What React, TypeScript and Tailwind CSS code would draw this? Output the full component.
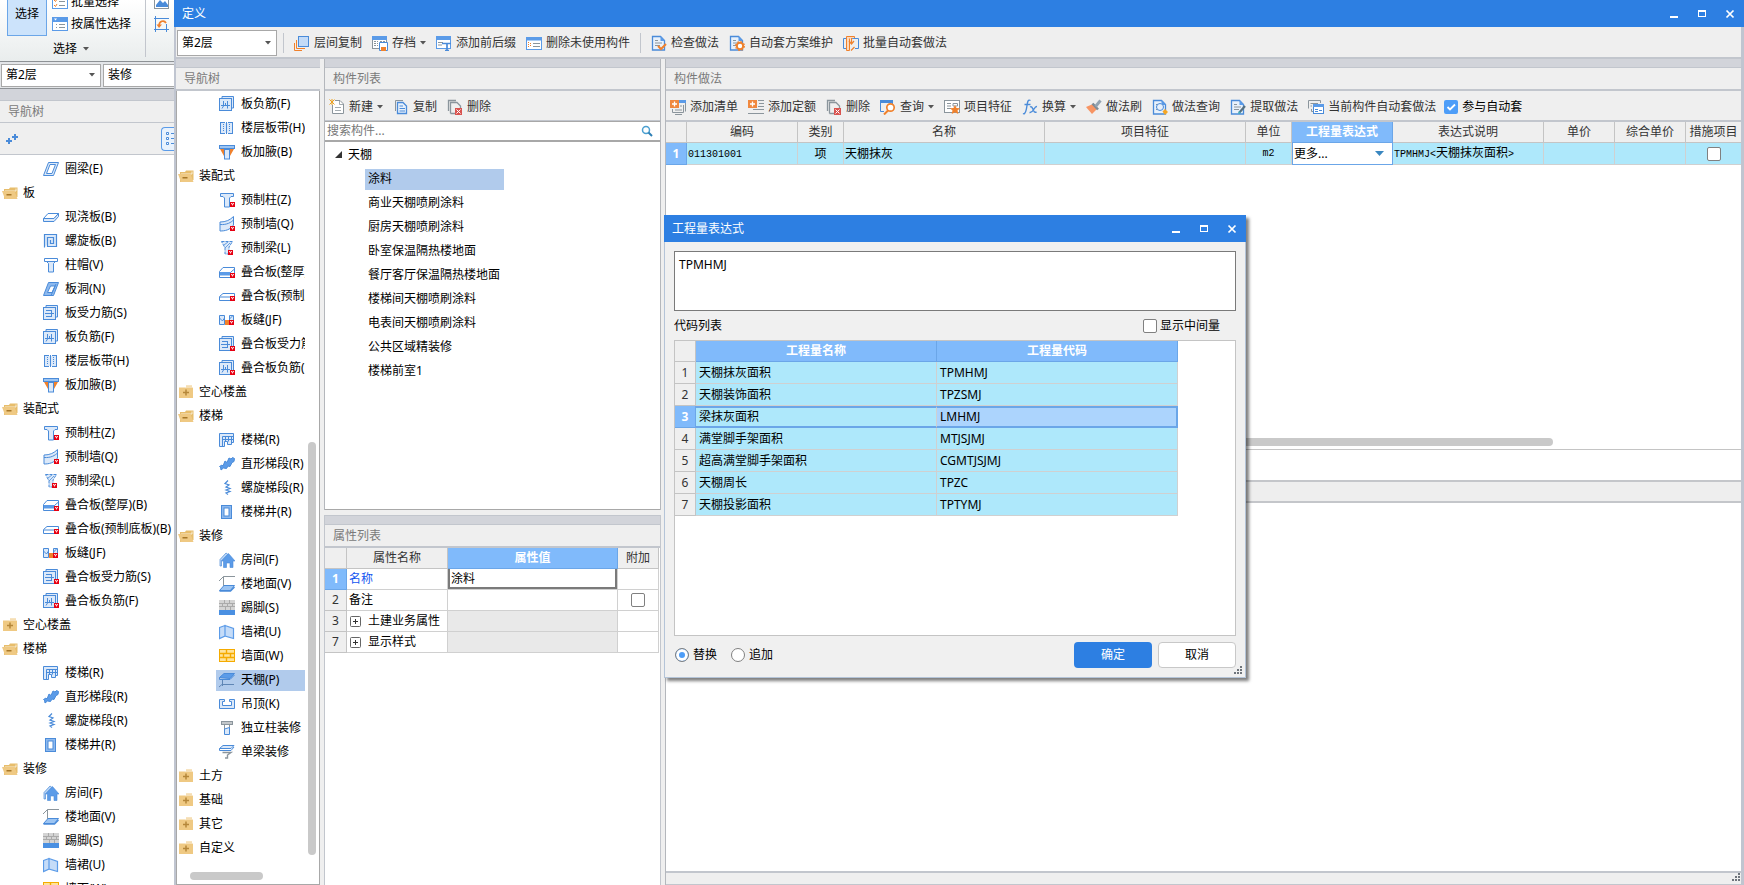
import React from 'react';

const B = '#4a8bd9';
const L = '#dce9f9';
const M = '#5b9be8';
const G = '#8b959c';
const O = '#f0812c';

const badge = (
  <g>
    <rect x="11" y="10" width="5" height="5" fill="#e60012" />
    <path d="M12.5 11v1h1v1.5M14.5 11v1h-1" stroke="#fff" strokeWidth="0.8" fill="none" />
  </g>
);

const rebarFrame = (
  <>
    <path d="M3 2.5V0.5H14.5V12H12.5" fill={L} stroke={B} />
    <rect x="0.5" y="2.5" width="12" height="12" fill={L} stroke={B} />
  </>
);
const rebarS = (
  <>
    {rebarFrame}
    <path d="M3 5.5H9M2 8.5H11M3 11.5H9M8.5 5.5V11.5" fill="none" stroke={B} />
  </>
);
const rebarF = (
  <>
    {rebarFrame}
    <path d="M2 9.5H11M4.5 5V10L3 12.500M8.5 5V12.500M6.5 7V9.500" fill="none" stroke={B} />
  </>
);
const removePages = (
  <>
    <path d="M1.5 12V1.5H9M3.5 14.5V3.5H10L13.5 7V9M3.5 14.5H8" fill="none" stroke={G} strokeWidth="1.3" />
    <rect x="8" y="9" width="7" height="7" fill="#d9534f" />
    <path d="M9.5 10.5l4 4M13.5 10.5l-4 4" stroke="#fff" />
  </>
);
const doc = (
  <>
    <path d="M1.5 15V1.5H9.5L13.5 5.5V15z" fill="#e8f1fb" stroke={B} strokeWidth="1.3" />
    <path d="M9.5 1v5H14" fill={M} />
    <path d="M4 5.5h3M4 8h7M4 10.5h5" stroke={G} />
  </>
);

const shapes: Record<string, React.ReactNode> = {
  folderOpen: (
    <>
      <path d="M2 14V4h5l1-1.5h7.5V12z" fill="#e7bd6b" />
      <path d="M3 6h11v-2.5" stroke="#fff" fill="none" strokeWidth="0.7" />
      <path d="M0 6H12.5L15.5 14H3z" fill="#efc983" />
      <rect x="4.5" y="9" width="5" height="1.5" fill="#a87828" />
    </>
  ),
  folderClosed: (
    <>
      <path d="M8 1.5h6V4H8z" fill="#efc983" />
      <rect x="1" y="3.5" width="14" height="10.5" fill="#efc983" />
      <path d="M7.5 3H14.5" stroke="#fff" strokeWidth="0.8" />
      <path d="M5 8.5h6M8 5.5v6" stroke="#b5873a" strokeWidth="1.5" />
    </>
  ),
  ringBeam: (
    <>
      <path d="M5.5 1.5H15.5L10.5 14.5H0.5z" fill={L} stroke={B} />
      <path d="M7 3.5H12.5L9 12.5H3.5z" fill="#fff" stroke={B} />
    </>
  ),
  hole: (
    <>
      <path d="M5.5 1.5H15.5L10.5 14.5H0.5z" fill="#8db9ee" stroke={B} />
      <path d="M7.5 5H12L9 11.5H4.5z" fill="#fff" stroke={B} />
      <path d="M8 14.5L13 3" stroke={B} />
    </>
  ),
  slab: (
    <>
      <path d="M0.5 9.5L5 4.5H15.5L11 9.5z" fill="#fff" stroke={B} />
      <path d="M0.5 9.5V12.5H11L15.5 7.5V4.5L11 9.5z" fill={L} stroke={B} />
    </>
  ),
  spiralSlab: (
    <path d="M1.5 14.5V1.5H13.5V13.5H4.5V4.5H10.5V10.5H7.5V7" fill={L} stroke={B} strokeWidth="1.2" />
  ),
  cap: (
    <>
      <path d="M1.5 1.5H14.5V4.5H1.5z" fill="#fff" stroke={B} />
      <path d="M3.5 4.5L5.5 6.5V15H10.5V6.5L12.5 4.5z" fill={L} stroke={B} />
    </>
  ),
  rebarS,
  rebarF,
  strip: (
    <>
      <rect x="1" y="3" width="13" height="10" fill={L} />
      <path d="M1 2.5H6M9 2.5H14M1 13.5H6M9 13.5H14M1.5 2V14M7.5 2V14M13.5 2V14" stroke={B} />
      <path d="M4.5 4V12M10.5 4V12" stroke={B} strokeDasharray="1 1" />
    </>
  ),
  haunch: (
    <>
      <path d="M1 5H5V12zM15 5H11V12z" fill={O} />
      <rect x="0.5" y="1.5" width="15" height="3" fill="#9cc4f2" stroke={B} />
      <rect x="5.5" y="5.5" width="5" height="9.500" fill={L} stroke={B} />
    </>
  ),
  preCol: (
    <>
      <path d="M1.5 1.5H14.5V4.5H12L10.5 6V15H5.5V6L4 4.5H1.5z" fill={L} stroke={B} />
      {badge}
    </>
  ),
  preWall: (
    <>
      <path d="M1 6C7 6 11 4 14.5 0.5V9C11 14 6 15 1 15z" fill={L} stroke={B} />
      <path d="M1 8.5C8 9 12 6.5 15 3.5" fill="none" stroke={B} />
      {badge}
    </>
  ),
  preBeam: (
    <>
      <path d="M2.5 1.5H13.5L10 7V14H6V8z" fill={L} stroke={B} strokeDasharray="3 1" />
      <path d="M5 5L9 2M6 8l5-5" stroke={B} strokeWidth="0.8" />
      <g transform="translate(-2,0)">{badge}</g>
    </>
  ),
  compWhole: (
    <>
      <path d="M0.5 7.5L4 3.5H15.5V10L12 13.5H0.5z" fill="#fff" stroke={B} />
      <rect x="1" y="8" width="11" height="3.5" fill={M} />
      <path d="M12 8l3.5-3" stroke={B} />
      <g transform="translate(0,-1)">{badge}</g>
    </>
  ),
  compBase: (
    <>
      <path d="M0.5 8.5L4 5.5H15.5V10L12 12.5H0.5z" fill="#fff" stroke={B} />
      <path d="M1 9H12" stroke={B} />
      <g transform="translate(0,-2)">{badge}</g>
    </>
  ),
  seam: (
    <>
      <path d="M0.5 3.5H5.5V12.5H0.5zM10.5 3.5H14.5V12.5H10.5z" fill={L} stroke={B} />
      <path d="M0.5 6l3 3 2-3M10.5 7l3-3" stroke={B} fill="none" />
      <rect x="6" y="8" width="5" height="5" fill={O} />
      <g transform="translate(-1,-2)">{badge}</g>
    </>
  ),
  compS: (
    <>
      {rebarS}
      {badge}
    </>
  ),
  compF: (
    <>
      {rebarF}
      {badge}
    </>
  ),
  stair: (
    <>
      <path d="M0.5 1.5H14.5V10.5H12.5V12.5H8.5V9.5H5.5V14.5H0.5z" fill={L} stroke={B} />
      <path d="M3.5 4.5H14M3.5 4.5V14M6.5 4.5V9M9.5 4.5V9.5M12.5 4.5V12M3 7.5H14" fill="none" stroke={B} />
    </>
  ),
  straight: (
    <path d="M0.5 10.5L3 9l1 1 2-5 2 1.5 2-4.5 2 1 1.5-1.5 2 1-.5 3-2 1-2 4-2-.5-1.5 2.5-3-.5L2 14l-.5-3z" fill={M} stroke={B} />
  ),
  spiralStair: (
    <path d="M9 0.5L6 3.5l4 1.5-3 2 4 1.5-4 1.5 4 1.5-4 1.5 2 1.5" fill="none" stroke={B} strokeWidth="1.2" />
  ),
  well: (
    <>
      <rect x="2.5" y="1.5" width="10" height="13" fill="#8db9ee" stroke={B} />
      <rect x="5" y="4" width="5" height="8" fill="#fff" stroke={B} />
    </>
  ),
  room: (
    <>
      <path d="M1 7.5L7 1l2 1.5L2.5 9V14H1z" fill="#b9d5f6" stroke={B} strokeWidth="0.7" />
      <path d="M9.5 1.5L2.5 9H4.5V15.5H7.5V11H11V15.5H14V9H16z" fill={M} stroke={B} strokeWidth="0.6" />
    </>
  ),
  floor: (
    <>
      <path d="M0 5L4.5 0.5H16M4.5 0.5V10" fill="none" stroke={G} />
      <path d="M0.5 14.5L5 9.5H15.5L11.5 14.5z" fill="#9cc4f2" stroke={B} />
      <path d="M0.5 15H11.5L15.5 11" fill="none" stroke={B} strokeWidth="1.5" />
    </>
  ),
  skirting: (
    <>
      <rect x="0" y="0" width="16" height="10" fill="#d4d4d4" />
      <path d="M0 3.5H16M0 6.5H16M5.5 0V3.5M10.5 0V3.5M3.5 3.5V7M8.5 3.5V7M13.5 3.5V7M6.5 7V10M11.5 7V10" stroke="#aaa" />
      <rect x="0" y="10" width="16" height="5" fill="#4a90e2" />
    </>
  ),
  wainscot: (
    <path d="M0.5 3.5L6 1.5V12L0.5 14.5zM6 1.5L14.5 4.5V14.5L6 12z" fill="#c5dcf8" stroke={M} strokeWidth="1.2" />
  ),
  wallFace: (
    <>
      <rect x="0.5" y="1.5" width="15" height="12" fill="#ffe39a" stroke="#f5ab00" />
      <path d="M0 5.5H16M0 9.5H16M7.5 1V5M4.5 6V9M11.5 6V9M7.5 10V14" stroke="#f5ab00" strokeWidth="1.4" />
    </>
  ),
  ceiling: (
    <>
      <path d="M0.5 5.5L5 1.5H15.5L11 6.5z" fill={M} stroke={B} />
      <path d="M0.5 5.5V7.5H11L15.5 3" fill="none" stroke={B} />
      <path d="M3.5 8V14M3.5 12.5H15M3.5 12L0 15" stroke="#5f86b5" fill="none" />
    </>
  ),
  suspended: (
    <path d="M0.5 3.5H5.5V5.5H3.5V9.5H12.5V5.5H10.5V3.5H15.5V12.5H0.5z" fill={L} stroke={B} />
  ),
  colDecor: (
    <>
      <rect x="2.5" y="1.5" width="11" height="3" fill="#c3c7ca" stroke={G} />
      <path d="M5.5 4.5V9M10.5 4.5V8" stroke={G} />
      <path d="M5.5 9L10.5 7.5V14.5H5.5z" fill={L} stroke={B} />
    </>
  ),
  beamDecor: (
    <>
      <path d="M0.5 4.5L4 1.5H15L12 4.5z" fill={L} stroke={B} />
      <path d="M0.5 4.5V6.5H12L15 3" fill="none" stroke={B} />
      <path d="M3.5 8.5H12L8.5 11v3H6" fill="none" stroke={G} strokeWidth="1.4" />
    </>
  ),
  layerCopy: (
    <>
      <path d="M2.5 5V13.5H11M0.5 8V15.5H8" fill="none" stroke={O} />
      <rect x="4.5" y="1.5" width="10" height="10" fill="#c3dbf8" stroke={B} />
    </>
  ),
  archive: (
    <>
      <rect x="0.5" y="1.5" width="14" height="12" fill="#fff" stroke={G} />
      <rect x="0" y="1" width="15" height="4" fill={M} />
      <path d="M2 6.5H6M2 8.5H6M2 10.5H6M8 6.5H13" stroke={G} strokeDasharray="2 1" />
      <path d="M7.5 7.5H15.5V15.5H7.5z" fill="#fff" stroke={B} />
      <rect x="9" y="12" width="5" height="4" fill={O} />
    </>
  ),
  prefix: (
    <>
      <rect x="0.5" y="1.5" width="14" height="12" fill="#fff" stroke={M} />
      <rect x="0" y="1" width="15" height="4" fill={M} />
      <path d="M2 7.5H7M2 10H6" stroke={G} />
      <path d="M6 8.5H15M11 8V15.5M9 15.5H13" stroke={B} strokeWidth="1.7" />
    </>
  ),
  listPanel: (
    <>
      <rect x="0.5" y="2.5" width="15" height="12" fill="#fff" stroke={M} />
      <rect x="0" y="2" width="16" height="3.5" fill={M} />
      <path d="M2 7.5h1M4 8.5h1M2 9.5h1M4 10.5h1M2 11.5h1" stroke={O} />
      <path d="M7 8.5H14M7 11.5H14" stroke={G} />
    </>
  ),
  check: (
    <>
      {doc}
      <path d="M7 11l3 3 5-5" fill="none" stroke={O} strokeWidth="2" />
    </>
  ),
  gear: (
    <>
      {doc}
      <circle cx="11" cy="11" r="3.200" fill="#fff" stroke={O} strokeWidth="2" />
      <circle cx="11" cy="11" r="4.600" fill="none" stroke={O} strokeDasharray="1.8 1.8" />
    </>
  ),
  batch: (
    <>
      <path d="M3 3.5H0.500V13.5H3M8 3.5H15.5V13.5H12" fill="none" stroke={B} />
      <path d="M11.5 3V1.5H3.5V15.5H6.5V3.500" fill="#fbd9bd" stroke={O} />
      <path d="M8 15.5L11.5 12M8.5 3V8.5M6 6l2.5 3L11 6" fill="none" stroke={O} strokeWidth="1.2" />
    </>
  ),
  newDoc: (
    <>
      <path d="M3.5 6V14.5H14.5V5L11 1.5H6" fill="#fff" stroke={G} />
      <path d="M10.5 2V5.5H14.5M6 8.5H12M6 11.5H12" fill="none" stroke={G} strokeWidth="0.8" />
      <path d="M0.5 0.5l5 5M5.5 0.5l-5 5M3 0V6" stroke="#eda11f" />
    </>
  ),
  copy: (
    <>
      <path d="M2.5 12V1.5H10" fill="none" stroke={G} />
      <path d="M4.5 3.5H10L13.5 7V14.5H4.5z" fill="#e8f1fb" stroke={B} strokeWidth="1.3" />
      <path d="M6.5 7H10M6.5 9.5H12M6.5 12H12" stroke={B} />
    </>
  ),
  removePages,
  addList: (
    <>
      <path d="M9 1.5H15.5V12.5" fill="none" stroke={G} />
      <rect x="9" y="1" width="7" height="3" fill={M} />
      <path d="M2.5 10V13.5H13.5V6M5 15.5H12M10 7H12M5 11H12" fill="none" stroke={G} />
      <rect x="0" y="1" width="9" height="8" fill="#f0883e" />
      <path d="M4.5 2.5V7.5M2 5H7" stroke="#fff" strokeWidth="1.3" />
    </>
  ),
  addQuota: (
    <>
      <path d="M10 1.5H16M11 4.5H16M10 7.5H16M5 10.5H16M0 14.5H16" stroke={G} />
      <rect x="0" y="1" width="9" height="8" fill="#f0883e" />
      <path d="M4.5 2.5V7.5M2 5H7" stroke="#fff" strokeWidth="1.3" />
    </>
  ),
  query: (
    <>
      <path d="M0.5 4V12.5H4M12.5 2V5" fill="none" stroke={B} />
      <rect x="0" y="1" width="13" height="3" fill={B} />
      <circle cx="10.5" cy="8.5" r="3.700" fill="#fff" stroke={O} strokeWidth="1.7" />
      <path d="M8 11.5L4 15.5" stroke={O} strokeWidth="2" />
    </>
  ),
  feature: (
    <>
      <rect x="0.5" y="1.5" width="15" height="12" fill="#fff" stroke={G} />
      <path d="M3 4.5H7M3 7H7M3 9.5H7M9 4.5H13.5V7H9z" fill="none" stroke={G} />
      <path d="M11 6l1.5 3 3.5.3-2.5 2.3.8 3.4-3.3-1.800L7.700 15l.8-3.400L6 9.300 9.500 9z" fill={O} />
    </>
  ),
  fx: (
    <path d="M8.500 1.500C6 0 5.500 3 5 6.500S3.500 16 1 14.500M2.500 5.500H8.500M8 8C11.500 6 10.500 15 14.500 13M15 7.500C12 7 11.500 14.500 7.500 13.500" fill="none" stroke={B} strokeWidth="1.4" />
  ),
  brush: (
    <>
      <path d="M0 8L7 5l4 5-5 5z" fill="#f79564" />
      <path d="M6.5 4.5L12 10.5" stroke="#7d8a94" strokeWidth="2.5" />
      <path d="M9.5 7.5L14.5 1.5" stroke="#93a3b1" strokeWidth="3" />
    </>
  ),
  docQuery: (
    <>
      {doc}
      <circle cx="8" cy="8" r="3.500" fill="#e8f1fb" stroke={B} />
      <path d="M10.5 12.5l2.500-2.500 3 3-3 3z" fill="#f5a623" />
    </>
  ),
  extract: (
    <>
      {doc}
      <path d="M9 14L15 7" stroke="#56707f" strokeWidth="2.2" />
      <path d="M8 15l1-3 2 2z" fill="#38b3c4" />
    </>
  ),
  autoApply: (
    <>
      <path d="M0.5 9.5V1.5H12.5V4M2.5 4.5H10M2.5 7H4M3.5 10V12.5H5" fill="none" stroke={G} />
      <rect x="5.5" y="5.5" width="10" height="9" fill="#fff" stroke={B} />
      <rect x="5" y="5" width="11" height="3" fill={M} />
      <path d="M7 10.5H10M7 12.5H10M11 11.5H14" stroke={B} />
    </>
  ),
  batchPick: (
    <>
      <rect x="0.5" y="0.5" width="15" height="14" fill="#fff" stroke={M} />
      <path d="M2 6l1.5 1.5L5 5M2 11l1.5 1.5L5 10" fill="none" stroke={O} />
      <path d="M7 7.5H13M7 11.5H13" stroke={G} />
    </>
  ),
  attrPick: (
    <>
      <rect x="0.5" y="1.5" width="15" height="13" fill="#fff" stroke={M} />
      <rect x="0" y="1" width="16" height="5" fill={M} />
      <path d="M2 2.5h3L3.5 4.5z" fill="#fff" />
      <path d="M4 8.5h1M7 8.5H13M4 11.5h1M7 11.5H13" stroke={G} />
    </>
  ),
  picture: (
    <>
      <rect x="0.5" y="0.5" width="14" height="12" fill="#fff" stroke={G} />
      <path d="M2 11V9l4-5 3 3 2-2 3 4v2z" fill={B} />
    </>
  ),
  rotate: (
    <>
      <path d="M1.5 0V16M12.5 8V16M0 2.5H15M0 13.5H15" stroke={B} />
      <path d="M5 10C5 5 10 3.5 12 7" fill="none" stroke={O} strokeWidth="1.7" />
      <path d="M2.5 8.5H8L5 12z" fill={O} />
    </>
  ),
};

const Icon = ({ name }: { name: string }) => (
  <svg viewBox="0 0 16 16" className="size-4 shrink-0" aria-hidden="true">
    {shapes[name]}
  </svg>
);

const Caret = () => (
  <svg viewBox="0 0 6 4" className="h-1 w-1.5 shrink-0" aria-hidden="true">
    <path d="M0 0H6L3 3.5z" fill="#555" />
  </svg>
);

const Grip = () => (
  <svg viewBox="0 0 8 8" className="size-2 shrink-0" aria-hidden="true">
    <path d="M6 0h2v2H6zM3 3h2v2H3zM6 3h2v2H6zM0 6h2v2H0zM3 6h2v2H3zM6 6h2v2H6z" fill="#6f757c" />
  </svg>
);

interface TreeItem {
  icon: string;
  text: string;
}

const slabItems: TreeItem[] = [
  { icon: 'ringBeam', text: '圈梁(E)' },
  { icon: 'folderOpen', text: '板' },
  { icon: 'slab', text: '现浇板(B)' },
  { icon: 'spiralSlab', text: '螺旋板(B)' },
  { icon: 'cap', text: '柱帽(V)' },
  { icon: 'hole', text: '板洞(N)' },
  { icon: 'rebarS', text: '板受力筋(S)' },
];

const sharedItems: TreeItem[] = [
  { icon: 'rebarF', text: '板负筋(F)' },
  { icon: 'strip', text: '楼层板带(H)' },
  { icon: 'haunch', text: '板加腋(B)' },
  { icon: 'folderOpen', text: '装配式' },
  { icon: 'preCol', text: '预制柱(Z)' },
  { icon: 'preWall', text: '预制墙(Q)' },
  { icon: 'preBeam', text: '预制梁(L)' },
  { icon: 'compWhole', text: '叠合板(整厚)(B)' },
  { icon: 'compBase', text: '叠合板(预制底板)(B)' },
  { icon: 'seam', text: '板缝(JF)' },
  { icon: 'compS', text: '叠合板受力筋(S)' },
  { icon: 'compF', text: '叠合板负筋(F)' },
  { icon: 'folderClosed', text: '空心楼盖' },
  { icon: 'folderOpen', text: '楼梯' },
  { icon: 'stair', text: '楼梯(R)' },
  { icon: 'straight', text: '直形梯段(R)' },
  { icon: 'spiralStair', text: '螺旋梯段(R)' },
  { icon: 'well', text: '楼梯井(R)' },
  { icon: 'folderOpen', text: '装修' },
  { icon: 'room', text: '房间(F)' },
  { icon: 'floor', text: '楼地面(V)' },
  { icon: 'skirting', text: '踢脚(S)' },
  { icon: 'wainscot', text: '墙裙(U)' },
  { icon: 'wallFace', text: '墙面(W)' },
];

const restItems: TreeItem[] = [
  { icon: 'ceiling', text: '天棚(P)' },
  { icon: 'suspended', text: '吊顶(K)' },
  { icon: 'colDecor', text: '独立柱装修' },
  { icon: 'beamDecor', text: '单梁装修' },
  { icon: 'folderClosed', text: '土方' },
  { icon: 'folderClosed', text: '基础' },
  { icon: 'folderClosed', text: '其它' },
  { icon: 'folderClosed', text: '自定义' },
];

const components = [
  '涂料',
  '商业天棚喷刷涂料',
  '厨房天棚喷刷涂料',
  '卧室保温隔热楼地面',
  '餐厅客厅保温隔热楼地面',
  '楼梯间天棚喷刷涂料',
  '电表间天棚喷刷涂料',
  '公共区域精装修',
  '楼梯前室1',
];

const codes = [
  { name: '天棚抹灰面积', code: 'TPMHMJ' },
  { name: '天棚装饰面积', code: 'TPZSMJ' },
  { name: '梁抹灰面积', code: 'LMHMJ' },
  { name: '满堂脚手架面积', code: 'MTJSJMJ' },
  { name: '超高满堂脚手架面积', code: 'CGMTJSJMJ' },
  { name: '天棚周长', code: 'TPZC' },
  { name: '天棚投影面积', code: 'TPTYMJ' },
];

const Tree = ({ items, selected }: { items: TreeItem[]; selected?: string }) => (
  <ul className="min-w-0 flex-1 overflow-hidden">
    {items.map((item, index) => {
      const folder = item.icon.startsWith('folder');
      return (
        <li key={index} className={`flex h-6 items-center ${folder ? 'pl-px' : 'pl-[39px]'}`}>
          <button
            className={`flex h-[21px] items-center whitespace-nowrap text-left ${
              folder ? 'gap-[5px]' : 'w-full gap-1.5 pl-[3px]'
            } ${item.text === selected ? 'bg-[#b1cbec]' : ''}`}
          >
            <Icon name={item.icon} />
            {item.text}
          </button>
        </li>
      );
    })}
  </ul>
);

const Tool = ({ icon, text, menu }: { icon: string; text: string; menu?: boolean }) => (
  <button className="flex shrink-0 items-center gap-1 whitespace-nowrap text-[#333]">
    <Icon name={icon} />
    {text}
    {menu && <Caret />}
  </button>
);

const PanelTitle = ({ text }: { text: string }) => (
  <div className="shrink-0">
    <div className="h-[9px] border-b border-[#c2c6cd] bg-[#d2d4da]" />
    <h2 className="flex h-[23px] items-center border-b-2 border-[#c2c6cd] bg-[#efefef] pl-2 text-[#7a7a7a]">
      {text}
    </h2>
  </div>
);

const Combo = ({ label, value, className }: { label: string; value: string; className: string }) => (
  <div className={`relative flex shrink-0 items-center border border-[#a8a8a8] bg-white ${className}`}>
    <select aria-label={label} className="size-full appearance-none bg-transparent pl-1 outline-none">
      <option>{value}</option>
    </select>
    <span className="pointer-events-none absolute right-[5px] flex">
      <Caret />
    </span>
  </div>
);

const WindowButtons = () => (
  <div className="flex items-center gap-3">
    <button aria-label="最小化" className="size-4">
      <svg viewBox="0 0 16 16">
        <path d="M4 10h8v2H4z" fill="#fff" />
      </svg>
    </button>
    <button aria-label="最大化" className="size-4">
      <svg viewBox="0 0 16 16">
        <path d="M4 4h8v7H4zM5 6v4h6V6z" fill="#fff" fillRule="evenodd" />
      </svg>
    </button>
    <button aria-label="关闭" className="size-4">
      <svg viewBox="0 0 16 16">
        <path d="M4.5 4.5l7 7M11.5 4.5l-7 7" stroke="#fff" strokeWidth="1.7" />
      </svg>
    </button>
  </div>
);

const boxClass = 'block size-3.5 shrink-0 appearance-none rounded-xs border border-[#808080] bg-white';
const cell = 'border-r border-b border-[#d0d0d0]';
const head = 'border-r border-b border-[#c4c4c4] bg-[#efefef] font-normal text-[#333]';
const activeHead = 'border-r border-b border-[#6ba6e8] bg-[#80bafb] font-bold text-white';
const mono = "font-['Liberation_Mono',monospace] text-[10px]";

const MainWindow = () => (
  <aside className="flex w-[174px] shrink-0 flex-col overflow-hidden bg-[#efefef]">
    <div className="flex h-[62px] shrink-0 border-b border-[#8e9296] bg-linear-to-b from-white to-[#e9eded]">
      <div className="flex w-[145px] shrink-0 flex-col">
        <div className="flex h-9 items-end gap-[5px] pl-[7px]">
          <button className="flex h-9 w-10 items-start justify-center border border-t-0 border-[#6ba6e8] bg-[#cce3fb] pt-1.5">
            选择
          </button>
          <div className="flex h-9 flex-col gap-1.5">
            <button className="-mt-1.5 flex h-4 items-center gap-[3px] whitespace-nowrap">
              <Icon name="batchPick" />
              批量选择
            </button>
            <button className="flex h-4 items-center gap-[3px] whitespace-nowrap">
              <Icon name="attrPick" />
              按属性选择
            </button>
          </div>
        </div>
        <button className="flex h-[26px] items-center gap-1.5 pl-[53px]">
          选择
          <Caret />
        </button>
      </div>
      <div className="mb-1 w-px bg-[#c2c6cd]" />
      <div className="flex flex-col gap-1 pl-2">
        <button aria-label="图片" className="-mt-1 size-4">
          <Icon name="picture" />
        </button>
        <button aria-label="旋转" className="size-4">
          <Icon name="rotate" />
        </button>
      </div>
    </div>
    <div className="flex h-[27px] shrink-0 items-center gap-0.5 border-b border-[#8e9296] bg-[#e3e5e8] pl-px">
      <Combo label="楼层" value="第2层" className="h-[23px] w-[100px]" />
      <Combo label="构件类型" value="装修" className="h-[23px] w-[100px]" />
    </div>
    <div className="h-3 shrink-0 border-b border-[#c2c6cd] bg-[#d2d4da]" />
    <h2 className="flex h-[22px] shrink-0 items-center border-b border-[#c2c6cd] pl-2 text-[#7a7a7a]">导航树</h2>
    <div className="flex h-8 shrink-0 items-center justify-between border-b border-[#c2c6cd] pl-1.5">
      <button aria-label="展开" className="size-3">
        <svg viewBox="0 0 12 12">
          <path d="M0 8H6M3 5V11M6 4H12M9 1V7" stroke={B} strokeWidth="2" />
        </svg>
      </button>
      <button aria-label="列表" className="flex h-6 w-[13px] items-center rounded-l border border-r-0 border-[#5b9be8] bg-[#e8f2fd] pl-1">
        <svg viewBox="0 0 8 14" className="h-3.5 w-2">
          <path d="M0.5 0.5h2v2h-2zM0.5 5.5h2v2h-2zM0.5 10.5h2v2h-2z" fill="#fff" stroke={B} />
          <path d="M5 1.5H8M5 6.5H8M5 11.5H8" stroke={B} />
        </svg>
      </button>
    </div>
    <div className="flex flex-1 overflow-hidden bg-white pt-0.5 pl-px">
      <Tree items={[...slabItems, ...sharedItems]} />
    </div>
  </aside>
);

const NavPanel = () => (
  <section className="flex w-36 shrink-0 flex-col">
    <PanelTitle text="导航树" />
    <div className="flex min-h-0 flex-1 flex-col border border-t-0 border-[#a8a8a8] bg-white">
      <div className="flex min-h-0 flex-1 pt-px">
        <Tree items={[...sharedItems, ...restItems]} selected="天棚(P)" />
        <div className="flex w-3.5 justify-center">
          <div className="mt-[350px] h-[413px] w-2 rounded-full bg-[#c9c9c9]" />
        </div>
      </div>
      <div className="flex h-3 shrink-0 items-start pl-[13px]">
        <div className="h-2 w-[73px] rounded-full bg-[#c9c9c9]" />
      </div>
    </div>
  </section>
);

const ExpandBox = () => (
  <svg viewBox="0 0 11 11" className="size-[11px] shrink-0" aria-hidden="true">
    <rect x="0.5" y="0.5" width="10" height="10" rx="1" fill="#fff" stroke="#666" />
    <path d="M3 5.5H8M5.5 3V8" stroke="#333" />
  </svg>
);

const ComponentPanel = () => (
  <section className="flex w-[337px] shrink-0 flex-col gap-[5px]">
    <div className="flex min-h-0 flex-1 flex-col border-x border-[#b4b7bc]">
      <PanelTitle text="构件列表" />
      <div className="flex h-[30px] shrink-0 items-center gap-2.5 border-b border-[#c2c6cd] pt-0.5 pl-1">
        <Tool icon="newDoc" text="新建" menu />
        <Tool icon="copy" text="复制" />
        <Tool icon="removePages" text="删除" />
      </div>
      <div className="flex h-5 shrink-0 items-center border-y border-[#a8a8a8] bg-white pr-[7px] pl-0.5">
        <input
          aria-label="搜索构件"
          placeholder="搜索构件..."
          className="min-w-0 flex-1 outline-none placeholder:text-[#777]"
        />
        <svg viewBox="0 0 12 12" className="size-3" aria-hidden="true">
          <circle cx="5" cy="5" r="3.5" fill="#fff" stroke="#4a9fd0" strokeWidth="1.5" />
          <path d="M7.5 7.5L11 11" stroke="#2d7fb5" strokeWidth="2" />
        </svg>
      </div>
      <div className="min-h-0 flex-1 border-y border-[#a8a8a8] bg-white">
        <button className="flex h-[25px] items-center gap-1.5 pl-2.5">
          <svg viewBox="0 0 7 7" className="size-[7px]" aria-hidden="true">
            <path d="M7 0V7H0z" fill="#333" />
          </svg>
          天棚
        </button>
        <ul>
          {components.map((name, index) => (
            <li key={index} className="flex h-6 items-center pl-10">
              <button
                className={`h-[21px] w-[139px] whitespace-nowrap pl-[3px] text-left ${
                  index === 0 ? 'bg-[#b1cbec]' : ''
                }`}
              >
                {name}
              </button>
            </li>
          ))}
        </ul>
      </div>
    </div>
    <div className="flex h-[370px] shrink-0 flex-col border-x border-t border-[#c2c6cd] bg-white">
      <PanelTitle text="属性列表" />
      <table className="w-[334px] table-fixed border-separate border-spacing-0">
        <colgroup>
          <col className="w-[22px]" />
          <col className="w-[101px]" />
          <col className="w-[170px]" />
          <col className="w-[41px]" />
        </colgroup>
        <thead>
          <tr className="h-[21px]">
            <th className={head} />
            <th className={head}>属性名称</th>
            <th className={activeHead}>属性值</th>
            <th className={head}>附加</th>
          </tr>
        </thead>
        <tbody>
          <tr className="h-[21px]">
            <th className={activeHead}>1</th>
            <td className={`${cell} pl-0.5 text-[#1456f0]`}>名称</td>
            <td className={cell}>
              <input
                aria-label="名称"
                defaultValue="涂料"
                className="block h-5 w-full border-2 border-t-0 border-[#7a7a7a] pl-px outline-none"
              />
            </td>
            <td className={cell} />
          </tr>
          <tr className="h-[21px]">
            <th className={head}>2</th>
            <td className={`${cell} pl-0.5`}>备注</td>
            <td className={cell} />
            <td className={cell}>
              <input type="checkbox" aria-label="附加备注" className={`${boxClass} mx-auto`} />
            </td>
          </tr>
          {[
            ['3', '土建业务属性'],
            ['7', '显示样式'],
          ].map(([no, text]) => (
            <tr key={no} className="h-[21px]">
              <th className={head}>{no}</th>
              <td className={`${cell} pl-[3px]`}>
                <button className="flex items-center gap-[7px] whitespace-nowrap">
                  <ExpandBox />
                  {text}
                </button>
              </td>
              <td className={`${cell} bg-[#e9e9e9]`} />
              <td className={cell} />
            </tr>
          ))}
        </tbody>
      </table>
    </div>
  </section>
);

const MethodPanel = () => (
  <section className="flex min-w-0 flex-1 flex-col border-l border-[#b4b7bc] bg-white">
    <PanelTitle text="构件做法" />
    <div className="flex h-[31px] shrink-0 items-center gap-2.5 border-b-2 border-[#c2c6cd] bg-[#efefef] pt-0.5 pl-1">
      <Tool icon="addList" text="添加清单" />
      <Tool icon="addQuota" text="添加定额" />
      <Tool icon="removePages" text="删除" />
      <Tool icon="query" text="查询" menu />
      <Tool icon="feature" text="项目特征" />
      <Tool icon="fx" text="换算" menu />
      <Tool icon="brush" text="做法刷" />
      <Tool icon="docQuery" text="做法查询" />
      <Tool icon="extract" text="提取做法" />
      <Tool icon="autoApply" text="当前构件自动套做法" />
      <label className="relative -ml-0.5 flex items-center gap-1 whitespace-nowrap">
        <input
          type="checkbox"
          defaultChecked
          className="block size-3.5 appearance-none rounded-xs bg-[#4d9df8]"
        />
        <svg viewBox="0 0 14 14" className="pointer-events-none absolute left-0 size-3.5" aria-hidden="true">
          <path d="M3.5 7l2.5 2.5 5-5" fill="none" stroke="#fff" strokeWidth="1.8" />
        </svg>
        参与自动套
      </label>
    </div>
    <div className="flex h-[328px] shrink-0 flex-col justify-between border-b border-[#c4c4c4] pb-[3px]">
      <table className="w-full table-fixed border-separate border-spacing-0">
        <colgroup>
          <col className="w-[21px]" />
          <col className="w-[111px]" />
          <col className="w-[46px]" />
          <col className="w-[201px]" />
          <col className="w-[201px]" />
          <col className="w-[46px]" />
          <col className="w-[101px]" />
          <col className="w-[151px]" />
          <col className="w-[71px]" />
          <col className="w-[71px]" />
          <col />
        </colgroup>
        <thead>
          <tr className="h-[21px] whitespace-nowrap">
            <th className={head} />
            <th className={head}>编码</th>
            <th className={head}>类别</th>
            <th className={head}>名称</th>
            <th className={head}>项目特征</th>
            <th className={head}>单位</th>
            <th className={activeHead}>工程量表达式</th>
            <th className={head}>表达式说明</th>
            <th className={head}>单价</th>
            <th className={head}>综合单价</th>
            <th className={`${head} border-r-0`}>措施项目</th>
          </tr>
        </thead>
        <tbody>
          <tr className="h-[22px] bg-[#aee8fb]">
            <th className={activeHead}>1</th>
            <td className={`${cell} pl-px`}>
              <span className={mono}>011301001</span>
            </td>
            <td className={`${cell} text-center`}>项</td>
            <td className={`${cell} pl-px`}>天棚抹灰</td>
            <td className={cell} />
            <td className={`${cell} ${mono} text-center`}>m2</td>
            <td className="border border-t-0 border-[#6ba6e8] bg-white">
              <div className="relative flex items-center">
                <select
                  aria-label="工程量表达式"
                  className="h-5 w-full appearance-none bg-transparent pl-px outline-none"
                >
                  <option>更多...</option>
                </select>
                <svg viewBox="0 0 9 5" className="pointer-events-none absolute right-2 h-[5px] w-[9px]" aria-hidden="true">
                  <path d="M0 0H9L4.5 5z" fill="#3a87c0" />
                </svg>
              </div>
            </td>
            <td className={`${cell} pl-px whitespace-nowrap`}>
              <span className={mono}>TPMHMJ&lt;</span>
              天棚抹灰面积
              <span className={mono}>&gt;</span>
            </td>
            <td className={cell} />
            <td className={cell} />
            <td className={`${cell} border-r-0`}>
              <input type="checkbox" aria-label="措施项目" className={`${boxClass} mx-auto`} />
            </td>
          </tr>
        </tbody>
      </table>
      <div className="h-2 w-[887px] rounded-full bg-[#c9c9c9]" />
    </div>
    <div className="h-[30px] shrink-0" />
    <div className="h-[23px] shrink-0 border-y-2 border-[#c4c6ca] bg-[#eee]" />
    <div className="flex-1" />
    <div className="flex h-3.5 shrink-0 items-start justify-end border-t-2 border-b border-[#c2c6cd] bg-[#efefef] pr-px">
      <Grip />
    </div>
  </section>
);

const DefineWindow = () => (
  <main className="flex min-w-0 flex-1 flex-col bg-[#efefef]">
    <header className="flex h-[27px] shrink-0 items-center justify-between bg-[#2d7fe2] pr-1.5 pl-2 text-white">
      <h1>定义</h1>
      <WindowButtons />
    </header>
    <div className="flex min-h-0 flex-1 flex-col border-r-3 border-l-2 border-[#c0c5d0]">
      <div className="flex h-8 shrink-0 items-center gap-2.5 border-b-2 border-[#c2c6cd] pt-0.5 pl-px">
        <Combo label="当前楼层" value="第2层" className="h-[26px] w-[100px]" />
        <div className="-ml-1 h-5 w-px bg-[#c2c6cd]" />
        <Tool icon="layerCopy" text="层间复制" />
        <Tool icon="archive" text="存档" menu />
        <Tool icon="prefix" text="添加前后缀" />
        <Tool icon="listPanel" text="删除未使用构件" />
        <div className="h-5 w-px bg-[#c2c6cd]" />
        <Tool icon="check" text="检查做法" />
        <Tool icon="gear" text="自动套方案维护" />
        <Tool icon="batch" text="批量自动套做法" />
      </div>
      <div className="flex min-h-0 flex-1 gap-1">
        <NavPanel />
        <ComponentPanel />
        <MethodPanel />
      </div>
    </div>
  </main>
);

const ExpressionDialog = () => (
  <div
    role="dialog"
    aria-label="工程量表达式"
    className="absolute top-[215px] left-[664px] flex h-[463px] w-[582px] flex-col border border-t-0 border-[#b4c4d8] bg-[#f0f0f0] shadow-[3px_3px_3px_rgba(0,0,0,0.5)]"
  >
    <header className="-mx-px flex h-[27px] shrink-0 items-center justify-between bg-[#2d7fe2] pr-1.5 pl-2 text-white">
      <h2>工程量表达式</h2>
      <WindowButtons />
    </header>
    <div className="flex min-h-0 flex-1 flex-col px-[9px] pt-[9px]">
      <textarea
        aria-label="表达式"
        defaultValue="TPMHMJ"
        className="h-[60px] shrink-0 resize-none border border-[#7a7a7a] bg-white px-1 py-[5px] leading-4 outline-none"
      />
      <div className="flex h-[29px] shrink-0 items-center justify-between pr-4">
        <span>代码列表</span>
        <label className="flex items-center gap-[3px]">
          <input type="checkbox" className={boxClass} />
          显示中间量
        </label>
      </div>
      <div className="h-[296px] shrink-0 border border-[#c4c4c4] bg-white">
        <table className="w-[503px] table-fixed border-separate border-spacing-0">
          <colgroup>
            <col className="w-[21px]" />
            <col className="w-[241px]" />
            <col className="w-[241px]" />
          </colgroup>
          <thead>
            <tr className="h-[21px]">
              <th className={head} />
              <th className={activeHead}>工程量名称</th>
              <th className={activeHead}>工程量代码</th>
            </tr>
          </thead>
          <tbody>
            {codes.map((item, index) => {
              const on = index === 2;
              return (
                <tr key={item.code} className="h-[22px] bg-[#aee8fb]">
                  <th className={on ? activeHead : head}>{index + 1}</th>
                  <td
                    className={`pl-[3px] ${
                      on ? 'border-y-2 border-r border-y-[#6ba6e8] border-r-[#d0d0d0]' : cell
                    }`}
                  >
                    {item.name}
                  </td>
                  <td className={`pl-[3px] ${on ? 'border-2 border-l-0 border-[#6ba6e8] bg-[#acd4fd]' : cell}`}>
                    {item.code}
                  </td>
                </tr>
              );
            })}
          </tbody>
        </table>
      </div>
      <div className="flex flex-1 items-start justify-between pt-1.5">
        <div className="flex h-[26px] items-center gap-3.5 pl-px">
          {['替换', '追加'].map((text, index) => (
            <label key={text} className="flex items-center gap-1">
              <input
                type="radio"
                name="mode"
                defaultChecked={index === 0}
                className="block size-3.5 appearance-none rounded-full border border-[#808080] bg-white checked:bg-[#4d9df8] checked:shadow-[inset_0_0_0_3px_#fff]"
              />
              {text}
            </label>
          ))}
        </div>
        <div className="flex gap-1.5">
          <button className="h-[26px] w-[78px] rounded-sm bg-[#2d7fe2] text-white">确定</button>
          <button className="h-[26px] w-[78px] rounded-sm border border-[#c8c8c8] bg-white">取消</button>
        </div>
      </div>
    </div>
    <div className="absolute right-[3px] bottom-[3px]">
      <Grip />
    </div>
  </div>
);

const App: React.FC = () => {
  return (
    <div className="relative flex h-screen w-full overflow-hidden font-['Noto_Sans','Noto_Sans_CJK_SC',sans-serif] text-xs leading-4 text-black">
      <MainWindow />
      <DefineWindow />
      <ExpressionDialog />
    </div>
  );
};

export default App;
